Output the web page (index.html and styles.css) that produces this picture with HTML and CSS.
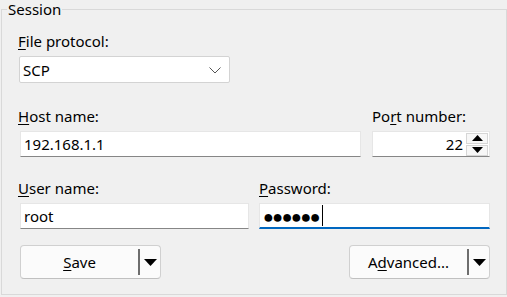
FILE: index.html
```html
<!DOCTYPE html>
<html>
<head>
<meta charset="utf-8">
<link rel="stylesheet" href="styles.css">
</head>
<body>
<fieldset class="group">
  <legend class="legend">Session</legend>
  <div class="field">
    <div class="label"><u>F</u>ile protocol:</div>
    <div class="combo">
      <span class="combo-text">SCP</span>
      <svg class="chevron" width="12" height="7" viewBox="0 0 12 7"><path d="M0.5 0.5 L6 6 L11.5 0.5" fill="none" stroke="#555" stroke-width="1"/></svg>
    </div>
  </div>
  <div class="row row-host">
    <div class="field grow">
      <div class="label"><u>H</u>ost name:</div>
      <div class="edit">192.168.1.1</div>
    </div>
    <div class="field port">
      <div class="label">Po<u>r</u>t number:</div>
      <div class="edit edit-port">
        <span class="num">22</span>
        <div class="spin">
          <div class="spin-btn"><svg width="11" height="6" viewBox="0 0 11 6"><path d="M0 6 L5.5 0 L11 6 Z" fill="#000"/></svg></div>
          <div class="spin-btn"><svg width="11" height="6" viewBox="0 0 11 6"><path d="M0 0 L5.5 6 L11 0 Z" fill="#000"/></svg></div>
        </div>
      </div>
    </div>
  </div>
  <div class="row row-user">
    <div class="field half">
      <div class="label"><u>U</u>ser name:</div>
      <div class="edit">root</div>
    </div>
    <div class="field half">
      <div class="label"><u>P</u>assword:</div>
      <div class="edit edit-focus"><span class="dots">●●●●●●</span><span class="caret"></span></div>
    </div>
  </div>
  <div class="row row-buttons">
    <div class="split">
      <span class="split-main"><u>S</u>ave</span>
      <span class="split-sep"></span>
      <span class="split-arrow"><svg width="13" height="7" viewBox="0 0 13 7"><path d="M0 0 L13 0 L6.5 7 Z" fill="#000"/></svg></span>
    </div>
    <div class="split">
      <span class="split-main">A<u>d</u>vanced...</span>
      <span class="split-sep"></span>
      <span class="split-arrow"><svg width="13" height="7" viewBox="0 0 13 7"><path d="M0 0 L13 0 L6.5 7 Z" fill="#000"/></svg></span>
    </div>
  </div>
</fieldset>
</body>
</html>
```
FILE: styles.css
```css
* { box-sizing: border-box; }
html, body { margin: 0; padding: 0; }
body {
  background: #f0f0f0;
  font-family: "Noto Sans", "Open Sans", sans-serif;
  font-size: 15px;
  color: #000;
  width: 507px;
  height: 297px;
  overflow: hidden;
  padding-left: 1px;
}
u { text-decoration-thickness: 1px; text-underline-offset: 2px; }
.group {
  margin: 0;
  width: 506px;
  height: 295px;
  border: 1px solid #d9d9d9;
  padding: 13px 16px 0 16px;
  min-width: 0;
}
.legend {
  margin-left: -11px;
  padding: 0 1px;
  line-height: 18px;
  height: 18px;
}
.field { display: flex; flex-direction: column; }
.label { line-height: 20px; padding-left: 0; margin-bottom: 5px; }
.combo {
  width: 211px;
  height: 27px;
  margin-left: 1px;
  background: #fff;
  border: 1px solid #d3d3d3;
  border-radius: 2px;
  display: flex;
  align-items: center;
  justify-content: space-between;
  padding: 0 8px 0 3px;
}
.chevron { margin-top: 1px; }
.row { display: flex; }
.row-host { margin-top: 23px; gap: 11px; }
.row-user { margin-top: 21px; gap: 10px; }
.grow { flex: 1; }
.port { width: 118px; }
.half { flex: 1; }
.edit {
  height: 26px;
  margin-left: 2px;
  background: #fff;
  border: 1px solid #e6e6e6;
  border-bottom: 1px solid #868686;
  padding: 0 3px;
  line-height: 24px;
  display: flex;
  align-items: center;
}
.port .edit, .half + .half .edit { margin-left: 0; }
.edit-port { justify-content: flex-end; padding-right: 1px; }
.num { margin-right: 3px; }
.spin { display: flex; flex-direction: column; gap: 1px; }
.spin-btn {
  width: 22px;
  height: 11px;
  background: #f7f7f7;
  border: 1px solid #d6d6d6;
  display: flex;
  align-items: center;
  justify-content: center;
}
.edit-focus { border-bottom: 2px solid #0067c0; }
.dots { font-size: 18px; letter-spacing: -1.5px; line-height: 20px; }
.caret { width: 1px; height: 21px; background: #000; margin-left: 3px; }
.row-buttons { margin-top: 16px; justify-content: space-between; padding-left: 2px; }
.split {
  width: 141px;
  height: 34px;
  background: #fbfbfb;
  border: 1px solid #d0d0d0;
  border-bottom-color: #c0c0c0;
  border-radius: 4px;
  display: flex;
  align-items: center;
}
.split-main { flex: 1; text-align: center; }
.split-sep { width: 2px; height: 26px; background: #6e6e6e; }
.split-arrow { width: 20px; display: flex; justify-content: center; }
```
